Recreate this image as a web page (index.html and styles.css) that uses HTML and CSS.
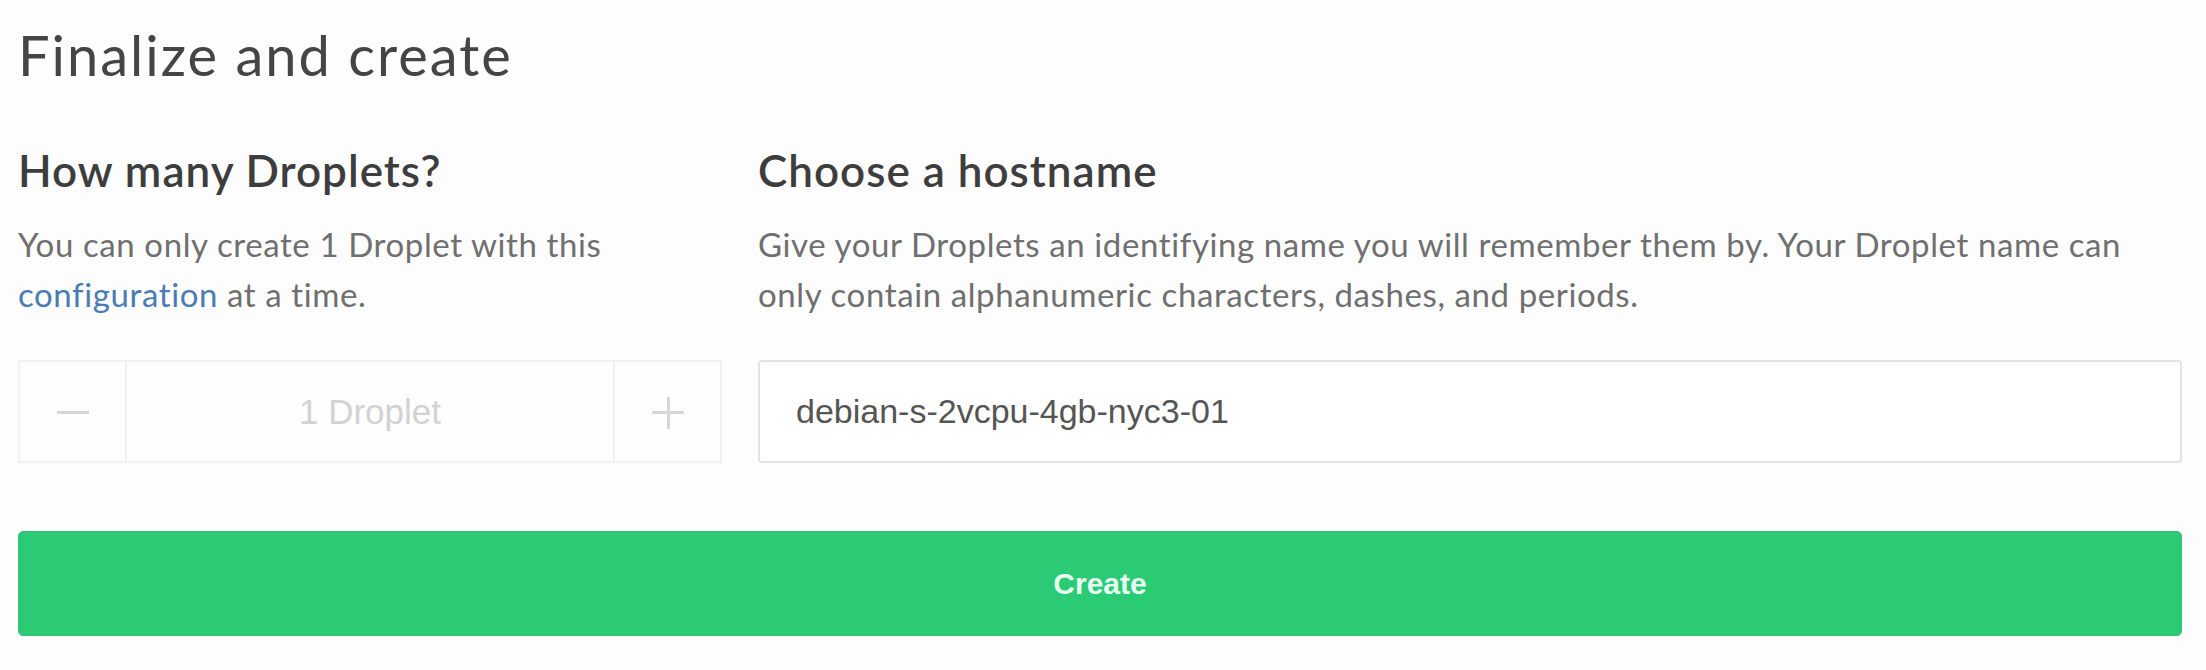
FILE: index.html
```html
<!DOCTYPE html>
<html lang="en">
<head>
<meta charset="utf-8">
<title>Finalize and create</title>
<link rel="stylesheet" href="styles.css">
</head>
<body>
<main class="page">
  <h1 class="title">Finalize and create</h1>
  <div class="cols">
    <section class="col col-left">
      <h2 class="heading">How many Droplets?</h2>
      <p class="desc">You can only create 1 Droplet with this <a class="link" href="#">configuration</a> at a time.</p>
      <div class="stepper">
        <button class="step step-minus" type="button" aria-label="Decrease"><span class="bar"></span></button>
        <div class="count">1 Droplet</div>
        <button class="step step-plus" type="button" aria-label="Increase"><span class="bar"></span><span class="bar bar-v"></span></button>
      </div>
    </section>
    <section class="col col-right">
      <h2 class="heading">Choose a hostname</h2>
      <p class="desc">Give your Droplets an identifying name you will remember them by. Your Droplet name can only contain alphanumeric characters, dashes, and periods.</p>
      <input class="hostname" type="text" value="debian-s-2vcpu-4gb-nyc3-01">
    </section>
  </div>
  <button class="create" type="button">Create</button>
</main>
</body>
</html>
```
FILE: styles.css
```css
html, body {
  margin: 0;
  padding: 0;
  background: #fdfdfd;
}

.page {
  padding: 21px 24px 0 18px;
  font-family: "Lato", "Open Sans", sans-serif;
}

.title {
  margin: 0;
  font-size: 56px;
  line-height: 67px;
  font-weight: 400;
  letter-spacing: 2px;
  color: #454545;
}

.cols {
  display: flex;
  gap: 36px;
  margin-top: 56px;
}

.col-left {
  width: 704px;
  flex: none;
}

.col-right {
  flex: 1;
  min-width: 0;
}

.heading {
  margin: 0;
  font-size: 44px;
  line-height: 53px;
  font-weight: 600;
  letter-spacing: 1px;
  color: #3d3d3d;
}

.desc {
  margin: 22px 0 0;
  font-size: 33px;
  line-height: 50px;
  letter-spacing: 0.6px;
  color: #6f6f6f;
}

.link {
  color: #4a7cb3;
  text-decoration: none;
}

.stepper {
  display: flex;
  height: 103px;
  margin-top: 41px;
  border: 2px solid #f1f1f1;
  box-sizing: border-box;
  background: #fdfdfd;
}

.step {
  width: 107px;
  flex: none;
  position: relative;
  border: 0;
  background: transparent;
  padding: 0;
}

.step-minus {
  border-right: 2px solid #f0f0f0;
}

.step-plus {
  border-left: 2px solid #f0f0f0;
}

.bar {
  position: absolute;
  left: 50%;
  top: 50%;
  width: 32px;
  height: 3px;
  margin: -1px 0 0 -16px;
  background: #d6d6d6;
}

.bar-v {
  width: 3px;
  height: 32px;
  margin: -15px 0 0 -1px;
}

.count {
  flex: 1;
  display: flex;
  align-items: center;
  justify-content: center;
  font-family: "Liberation Sans", Arial, sans-serif;
  font-size: 35px;
  color: #d2d2d2;
}

.hostname {
  display: block;
  width: 100%;
  height: 103px;
  margin-top: 41px;
  box-sizing: border-box;
  padding: 0 0 0 36px;
  border: 2px solid #e3e3e3;
  border-radius: 4px;
  background: #ffffff;
  font-family: "Liberation Sans", Arial, sans-serif;
  font-size: 34px;
  color: #555555;
  outline: none;
}

.create {
  display: block;
  width: 100%;
  height: 105px;
  margin-top: 68px;
  border: 1px solid #3dbd7c;
  border-radius: 5px;
  background: #2bcb75;
  color: #e9fff2;
  font-family: "Liberation Sans", Arial, sans-serif;
  font-size: 30px;
  font-weight: 700;
  padding: 0;
}
```
